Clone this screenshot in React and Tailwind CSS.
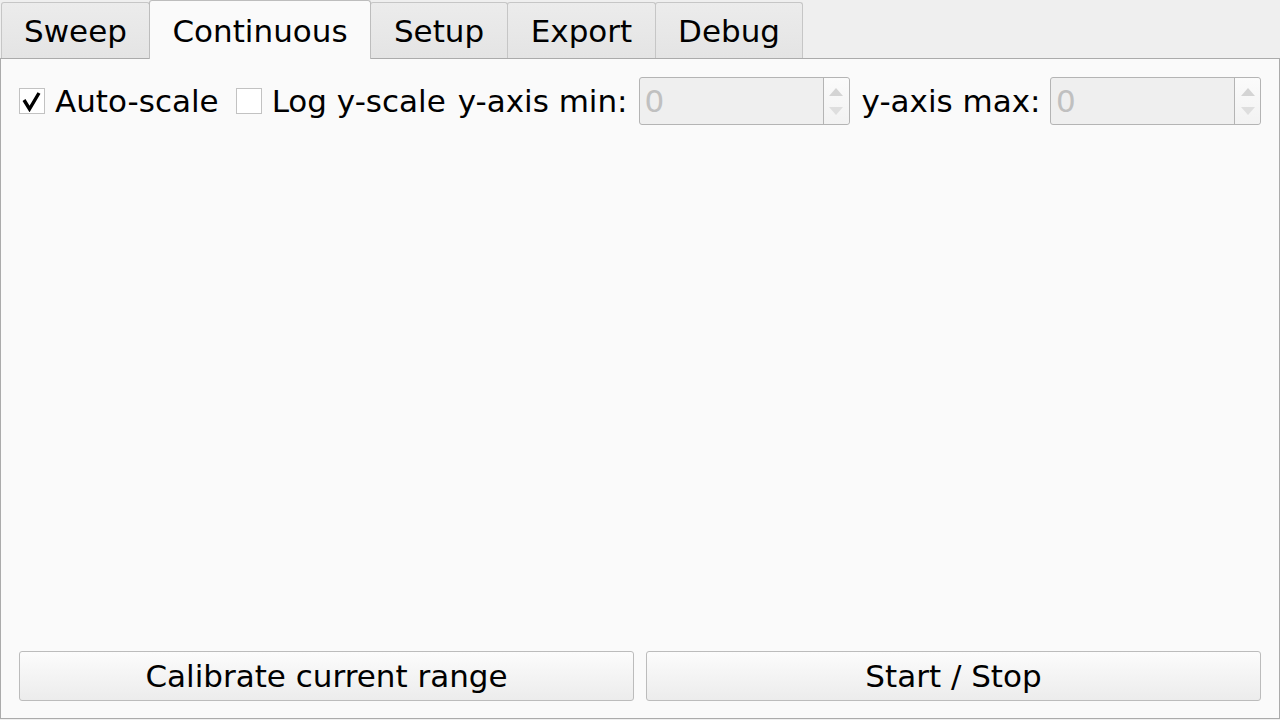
import React, { useState } from 'react';

const tabs = [
  { name: 'Sweep', w: 'w-[149px]' },
  { name: 'Continuous', w: 'w-[222px]' },
  { name: 'Setup', w: 'w-[138px]' },
  { name: 'Export', w: 'w-[149px]' },
  { name: 'Debug', w: 'w-[148px]' },
];

function CheckBox({ checked, label }) {
  return (
    <label className="flex items-center gap-[10px]">
      <span className="w-[26px] h-[26px] border border-[#c2c2c2] bg-white flex items-center justify-center">
        {checked && (
          <svg width="22" height="22" viewBox="0 0 22 22">
            <polyline points="3,10 8.5,19 18,3" fill="none" stroke="#000" strokeWidth="3.4" />
          </svg>
        )}
      </span>
      <span>{label}</span>
    </label>
  );
}

function SpinBox({ value }) {
  return (
    <div className="w-[211px] h-[48px] border border-[#b4b4b4] rounded-[3px] bg-[#efefef] flex">
      <div className="flex-1 pl-[5px] flex items-center text-[#c0c0c0]">{value}</div>
      <div className="w-[26px] border-l border-[#b4b4b4] bg-gradient-to-b from-[#fbfbfb] to-[#f2f2f2] rounded-r-[3px] flex flex-col items-center justify-center gap-[11px]">
        <svg width="14" height="8" viewBox="0 0 14 8"><polygon points="0,8 7,0 14,8" fill="#d4d4d4" /></svg>
        <svg width="14" height="8" viewBox="0 0 14 8"><polygon points="0,0 14,0 7,8" fill="#dedede" /></svg>
      </div>
    </div>
  );
}

export default function App() {
  const [active, setActive] = useState(1);

  return (
    <div className="w-[1280px] h-[720px] bg-[#efefef] flex flex-col text-[31px] text-black overflow-hidden" style={{ fontFamily: '"DejaVu Sans", sans-serif' }}>
      {/* tab bar */}
      <div className="h-[58px] flex items-end pl-[1px]">
        {tabs.map((t, i) =>
          i === active ? (
            <div key={t.name} onClick={() => setActive(i)} className={`${t.w} h-[59px] -mb-px -ml-px relative z-10 bg-[#fafafa] border border-b-0 border-[#bdbdbd] rounded-t-[3px] flex items-center justify-center pt-[2px]`}>
              {t.name}
            </div>
          ) : (
            <div key={t.name} onClick={() => setActive(i)} className={`${t.w} h-[56px] bg-gradient-to-b from-[#ececec] to-[#e4e4e4] border border-b-0 border-[#c6c6c6] rounded-t-[3px] flex items-center justify-center pt-[1px] -ml-px first:ml-0`}>
              {t.name}
            </div>
          )
        )}
      </div>

      {/* pane */}
      <div className="flex-1 mb-[1px] bg-[#fafafa] border border-[#ababab] flex flex-col pt-[18px] pb-[17px] px-[18px]">
        <div className="flex items-center h-[48px]">
          <CheckBox checked label="Auto-scale" />
          <div className="ml-[17px]"><CheckBox label="Log y-scale" /></div>
          <span className="ml-[12px]">y-axis min:</span>
          <div className="ml-[11px]"><SpinBox value="0" /></div>
          <span className="ml-[12px]">y-axis max:</span>
          <div className="ml-auto"><SpinBox value="0" /></div>
        </div>

        <div className="flex-1" />

        <div className="flex gap-[12px] h-[50px]">
          <button className="flex-1 border border-[#bcbcbc] rounded-[3px] bg-gradient-to-b from-[#fcfcfc] to-[#ececec]">Calibrate current range</button>
          <button className="flex-1 border border-[#bcbcbc] rounded-[3px] bg-gradient-to-b from-[#fcfcfc] to-[#ececec]">Start / Stop</button>
        </div>
      </div>
    </div>
  );
}
